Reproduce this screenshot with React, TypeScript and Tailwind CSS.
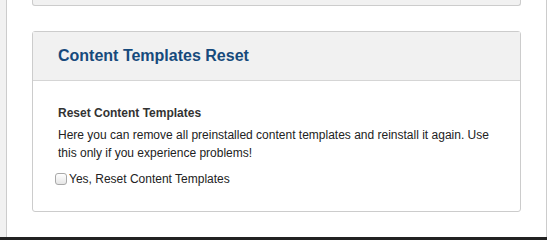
export default function App() {
    return (
        <div className="w-[556px] h-[240px] bg-white flex flex-col overflow-hidden" style={{ fontFamily: '"Liberation Sans", Arial, sans-serif' }}>
            <div className="flex flex-1">
                <div className="w-[6px] bg-[#f1f1f1]"></div>
                <div className="w-[541px] border-x border-[#cccccc] bg-white px-[25px]">
                    <div className="h-[6px] bg-[#f1f1f1] border-x border-b border-[#cccccc] rounded-b-[3px]"></div>

                    <div className="mt-[25px] border border-[#cccccc] rounded-[3px] bg-white">
                        <div className="h-[49px] bg-[#f1f1f1] border-b border-[#d5d5d5] px-[25px] flex items-center">
                            <h2 className="text-[16px] font-bold text-[#164a7c] leading-none">Content Templates Reset</h2>
                        </div>
                        <div className="px-[25px] pt-[24px] pb-[24px]">
                            <div className="text-[12px] leading-[16px] font-bold text-[#333333]">Reset Content Templates</div>
                            <p className="mt-[5px] text-[12px] leading-[18px] text-[#222222]">
                                Here you can remove all preinstalled content templates and reinstall it again. Use this only if you experience problems!
                            </p>
                            <label className="mt-[9px] flex items-center h-[16px] text-[12px] text-[#222222]">
                                <span className="w-[12px] h-[12px] ml-[-3px] mr-[2px] rounded-[3px] border border-[#a9a9a9] bg-gradient-to-b from-white to-[#e6e6e6]"></span>
                                Yes, Reset Content Templates
                            </label>
                        </div>
                    </div>
                </div>
                <div className="flex-1 bg-white"></div>
            </div>
            <div className="h-[3px] w-[547px] bg-[#222222]"></div>
        </div>
    );
}
